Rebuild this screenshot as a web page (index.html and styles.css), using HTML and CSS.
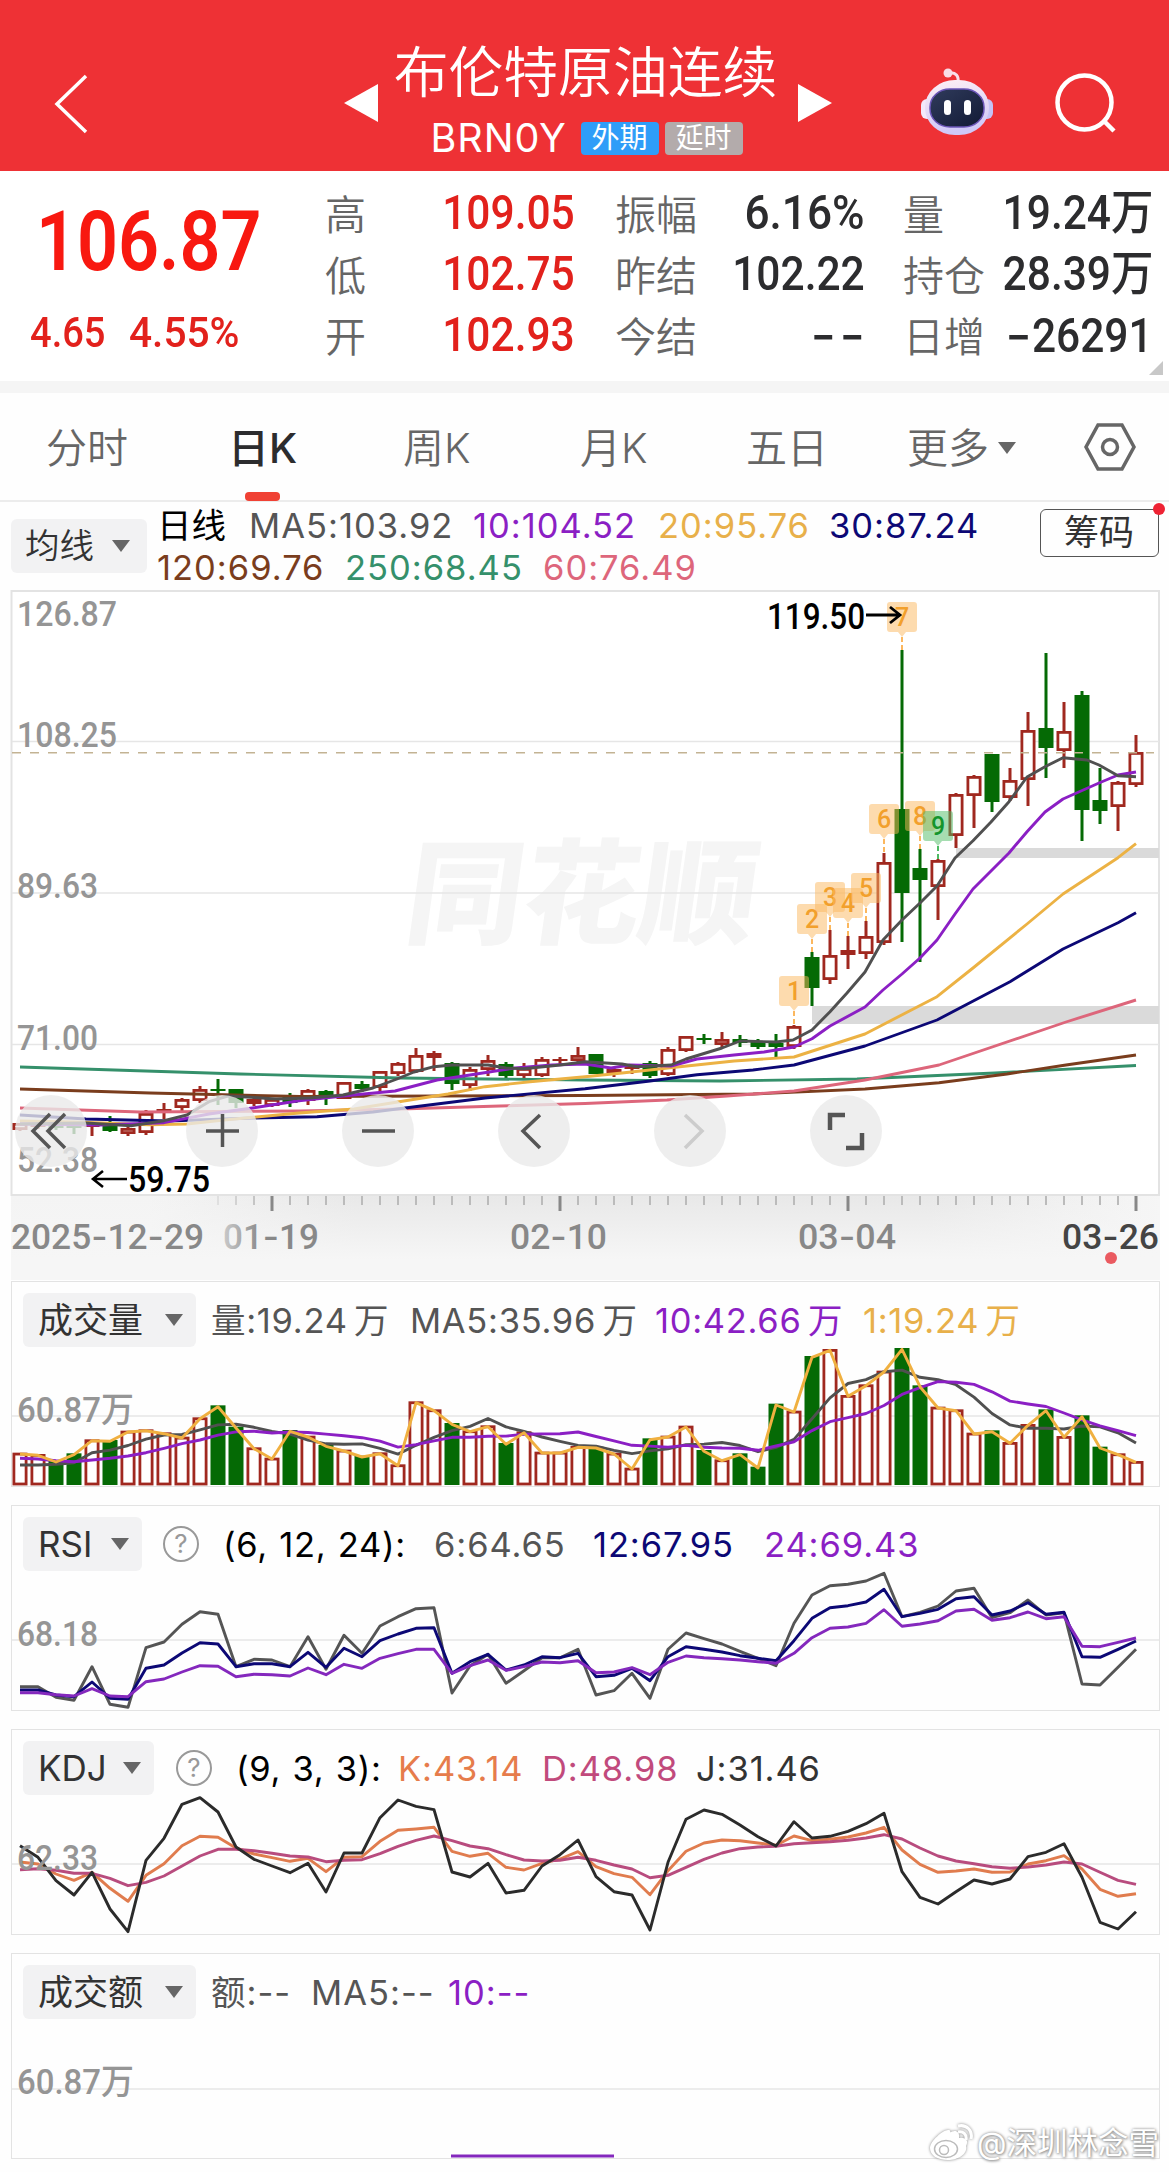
FILE: index.html
```html
<!DOCTYPE html>
<html lang="zh-CN">
<head>
<meta charset="utf-8">
<title>布伦特原油连续</title>
<link rel="stylesheet" href="styles.css">
</head>
<body>
<header class="topbar">
  <svg class="back" viewBox="0 0 36 62"><path d="M33 3 4 31l29 28"/></svg>
  <div class="instrument">
    <svg class="arrow" viewBox="0 0 34 38"><path d="M34 0v38L0 19z"/></svg>
    <div class="names">
      <h1 class="name">布伦特原油连续</h1>
      <div class="code-row"><span class="code">BRN0Y</span><span class="badge badge-blue">外期</span><span class="badge badge-gray">延时</span></div>
    </div>
    <svg class="arrow" viewBox="0 0 34 38"><path d="M0 0v38l34-19z"/></svg>
  </div>
  <svg class="robot" viewBox="0 0 72 68">
    <defs>
      <linearGradient id="shell" x1="0" y1="0" x2="0.2" y2="1"><stop offset="0" stop-color="#fff0f5"/><stop offset="1" stop-color="#cfc8f8"/></linearGradient>
      <linearGradient id="visor" x1="0" y1="0" x2="1" y2="1"><stop offset="0" stop-color="#303b5c"/><stop offset="1" stop-color="#121a35"/></linearGradient>
    </defs>
    <path d="M28 5c7-1 10 3 9 10" fill="none" stroke="#f8dfea" stroke-width="3"/>
    <circle cx="27" cy="5" r="4.5" fill="#f9dce6"/>
    <rect x="0" y="31" width="14" height="20" rx="6" fill="#f3e9fb"/>
    <rect x="58" y="31" width="14" height="20" rx="6" fill="#c5c3f5"/>
    <rect x="4" y="12" width="64" height="55" rx="30" ry="27" fill="url(#shell)"/>
    <rect x="9" y="21" width="54" height="38" rx="20" ry="18" fill="url(#visor)" stroke="#6b55b8" stroke-width="1.5"/>
    <rect x="23" y="32" width="7" height="15" rx="3.5" fill="#fff"/>
    <rect x="43" y="32" width="7" height="15" rx="3.5" fill="#fff"/>
  </svg>
  <svg class="search" viewBox="0 0 62 62"><circle cx="29.500" cy="29.500" r="27"/><path d="m49 48 10 10"/></svg>
</header>

<section class="quote">
  <div class="price">
    <div class="last"><span class="n">106.87</span></div>
    <div class="change"><span class="n">4.65</span><span class="n pct">4.55%</span></div>
  </div>
  <div class="stats">
    <span class="k">高</span><span class="v red"><span class="n">109.05</span></span>
    <span class="k">振幅</span><span class="v"><span class="n pct">6.16%</span></span>
    <span class="k">量</span><span class="v"><span class="n">19.24万</span></span>
    <span class="k">低</span><span class="v red"><span class="n">102.75</span></span>
    <span class="k">昨结</span><span class="v"><span class="n">102.22</span></span>
    <span class="k">持仓</span><span class="v"><span class="n">28.39万</span></span>
    <span class="k">开</span><span class="v red"><span class="n">102.93</span></span>
    <span class="k">今结</span><span class="v"><span class="n none">--</span></span>
    <span class="k">日增</span><span class="v"><span class="n"><span class="dash">-</span>26291</span></span>
  </div>
  <i class="corner"></i>
</section>

<nav class="tabs">
  <span class="tab">分时</span>
  <span class="tab active">日K</span>
  <span class="tab">周K</span>
  <span class="tab">月K</span>
  <span class="tab">五日</span>
  <span class="tab">更多<i class="caret"></i></span>
  <svg class="gear" viewBox="0 0 52 48"><path d="M14 2h24l12 22-12 22H14L2 24z"/><circle cx="26" cy="24" r="7.500"/></svg>
</nav>

<section class="ma">
  <div class="chip">均线<i class="caret"></i></div>
  <div class="ma-rows">
    <div class="legend ma-row1"><span class="c-black cjk">日线</span><span>MA5:103.92</span><span class="c-purple">10:104.52</span><span class="c-gold">20:95.76</span><span class="c-navy">30:87.24</span></div>
    <div class="legend ma-row2"><span class="c-brown">120:69.76</span><span class="c-green">250:68.45</span><span class="c-pink">60:76.49</span></div>
  </div>
  <div class="chips-btn">筹码<i class="dot"></i></div>
</section>

<section class="main-chart">
  <svg id="kline" viewBox="0 590 1169 690" width="1169" height="690"></svg>
  <div class="tools">
    <svg class="first" viewBox="0 0 72 72"><path d="M35 19 18 36l17 17M50 19 33 36l17 17"/></svg>
    <svg viewBox="0 0 72 72"><path d="M20 36h33M36.500 19v33"/></svg>
    <svg viewBox="0 0 72 72"><path d="M20 36h33"/></svg>
    <svg viewBox="0 0 72 72"><path d="M42 20 25 36l17 17"/></svg>
    <svg class="off" viewBox="0 0 72 72"><path d="M31 20 48 36 31 53"/></svg>
    <svg viewBox="0 0 72 72"><path class="thick" d="M20 35V20h15M36 53h16V38"/></svg>
  </div>
</section>

<section class="panel">
  <div class="panel-head head-vol">
    <div class="chip">成交量<i class="caret"></i></div>
    <span>量:19.24 万</span><span>MA5:35.96 万</span><span class="c-purple">10:42.66 万</span><span class="c-gold">1:19.24 万</span>
  </div>
  <svg id="volume" viewBox="12 1281 1147 205"></svg>
</section>
<section class="panel">
  <div class="panel-head head-rsi">
    <div class="chip">RSI<i class="caret"></i></div><i class="help">?</i>
    <span class="c-black par">(6, 12, 24):</span><span>6:64.65</span><span class="c-navy">12:67.95</span><span class="c-purple">24:69.43</span>
  </div>
  <svg id="rsi" viewBox="12 1505 1147 205"></svg>
</section>
<section class="panel">
  <div class="panel-head head-kdj">
    <div class="chip">KDJ<i class="caret"></i></div><i class="help">?</i>
    <span class="c-black par">(9, 3, 3):</span><span class="c-orange">K:43.14</span><span class="c-rose">D:48.98</span><span class="c-dark">J:31.46</span>
  </div>
  <svg id="kdj" viewBox="12 1729 1147 205"></svg>
</section>
<section class="panel">
  <div class="panel-head head-amt">
    <div class="chip">成交额<i class="caret"></i></div>
    <span>额:--</span><span>MA5:--</span><span class="c-purple">10:--</span>
  </div>
  <svg id="amount" viewBox="12 1953 1147 205"></svg>
</section>

<div class="credit">
  <svg viewBox="0 0 44 38"><path d="M20 9c6-4 11-2 10 5 7-1 10 3 7 8 2 8-8 14-18 14C8 36 1 31 1 24 1 17 14 6 19 6c3 0 3 2 1 5z" fill="#fff"/><ellipse cx="17" cy="25" rx="11.500" ry="8.500" fill="none" stroke="#bbb" stroke-width="1.500"/><circle cx="15" cy="26" r="4.500" fill="none" stroke="#bbb" stroke-width="1.500"/><path d="M29 8c5-1 9 2 8 8M29 2c9-2 15 5 13 13" fill="none" stroke="#fff" stroke-width="3"/></svg>
  <span>@深圳林念雪</span>
</div>
<script src="chart.js"></script>
</body>
</html>
```
FILE: styles.css
```css
* { box-sizing: border-box; }
body {
  margin: 0;
  width: 1169px;
  height: 2172px;
  overflow: hidden;
  position: relative;
  background: #fefefe;
  color: #333;
  font-family: Inter, "Noto Sans CJK SC", sans-serif;
}
svg { display: block; }
i { font-style: normal; }

/* header */
.topbar {
  height: 171px;
  background: #ee3135;
  color: #fff;
  display: grid;
  grid-template-columns: 344px 488px 89px 72px 62px 62px;
  align-items: start;
}
.back { width: 36px; height: 62px; margin: 73px 0 0 53px; fill: none; stroke: #fff; stroke-width: 3.5; }
.instrument { display: flex; justify-content: space-between; }
.arrow { width: 34px; height: 38px; margin-top: 84px; fill: #fff; }
.names { display: flex; flex-direction: column; align-items: center; padding: 40px 5px 0 0; }
.name { margin: 0; font-size: 54.8px; line-height: 64px; font-weight: 350; white-space: nowrap; }
.code-row { display: flex; align-items: center; height: 34px; margin-top: 17px; padding-left: 2px; }
.code { font-size: 39.5px; font-weight: 400; width: 150px; line-height: 34px; letter-spacing: 1px; }
.badge { width: 78px; height: 33px; border-radius: 4px; font-size: 28px; line-height: 33px; text-align: center; }
.badge-blue { background: #2f9df8; margin-right: 6px; }
.badge-gray { background: #b3abab; }
.robot { grid-column: 4; width: 72px; height: 68px; margin-top: 68px; }
.search { grid-column: 6; width: 62px; height: 62px; margin-top: 73px; fill: none; stroke: #fff; stroke-width: 4.5; }

/* quote */
.quote { position: relative; height: 210px; display: flex; background: #fff; }
.n {
  display: inline-block;
  font-family: Roboto, "Noto Sans CJK SC", sans-serif;
  font-weight: 500;
  transform: scaleX(.885);
  white-space: nowrap;
}
.price { width: 325px; color: #f81810; }
.last { height: 98px; margin-top: 20px; padding-left: 36px; font-size: 83px; line-height: 98px; }
.last .n { transform-origin: left; font-weight: 600; transform: scaleX(.865); }
.change { display: flex; font-size: 43px; line-height: 50px; margin-top: 18px; padding-left: 30px; color: #e2211c; }
.change .n { transform-origin: left; width: 99px; }
.change .pct { transform: scaleX(.945); }
.stats {
  display: grid;
  grid-template-columns: 60px 190px 40px 100px 150px 38px 85px 165px;
  grid-template-rows: repeat(3, 61px);
  padding-top: 13px;
}
.k { font-size: 41px; line-height: 63px; font-weight: 350; color: #666; white-space: nowrap; }
.v { font-size: 48px; line-height: 58px; display: flex; justify-content: flex-end; color: #2c2c2e; }
.v .n { transform-origin: right; }
.v .pct { transform: scaleX(.92); }
.red { color: #e2211c; }
.k:nth-child(6n + 1) { grid-column: 1; }
.k:nth-child(6n + 3) { grid-column: 4; }
.k:nth-child(6n + 5) { grid-column: 7; }
.dash { display: inline-block; font-family: Inter, sans-serif; transform: scaleX(1.35); transform-origin: right; }
.v .none { font-family: Inter, sans-serif; letter-spacing: 3px; transform: scaleX(1.15); margin-right: -3px; }
.corner { position: absolute; right: 6px; bottom: 6px; border: 7px solid transparent; border-right-color: #c8c8c8; border-bottom-color: #c8c8c8; }

/* tabs */
.tabs {
  height: 121px;
  border-top: 12px solid #f5f5f5;
  border-bottom: 2px solid #ececec;
  display: grid;
  grid-template-columns: 182px 175px 177px 166px 161px 177px 52px;
  padding-left: 46px;
  font-size: 41px;
  font-weight: 350;
  color: #666;
  line-height: 110px;
}
.tab { position: relative; white-space: nowrap; }
.tab.active { font-weight: 500; color: #2c2c2e; }
.tab.active::after { content: ""; position: absolute; left: 17px; bottom: 2px; width: 35px; height: 9px; border-radius: 4px; background: #f04134; }
.caret { display: inline-block; border: 9px solid transparent; border-top: 12px solid #666; border-bottom: 0; vertical-align: middle; }
.tab .caret { margin-left: 9px; margin-top: -7px; }
.gear { width: 52px; height: 48px; margin-top: 30px; fill: none; stroke: #666; stroke-width: 3.5; }

/* legends */
.chip { background: #f2f2f3; border-radius: 6px; color: #333; height: 54px; line-height: 54px; font-size: 35px; padding: 0 13px 0 15px; display: flex; align-items: center; justify-content: space-between; white-space: nowrap; }
.ma { height: 88px; display: grid; grid-template-columns: 136px 893px 119px; padding-left: 11px; }
.ma .chip { margin-top: 17px; font-size: 34.5px; font-weight: 350; padding: 0 17px 0 14px; }
.legend { display: grid; font-size: 34.5px; line-height: 42px; color: #555; white-space: nowrap; letter-spacing: 1px; }
.ma-rows { padding-top: 3px; }
.ma-row1 { grid-template-columns: 92px 224px 185px 171px 150px; padding-left: 10px; }
.ma-row2 { grid-template-columns: 188px 198px 150px; padding-left: 10px; }
.cjk { color: #000; letter-spacing: 0; }
.chips-btn { position: relative; height: 48px; margin-top: 7px; border: 1.5px solid #555; border-radius: 6px; font-size: 35px; line-height: 44px; text-align: center; padding-right: 1px; }
.dot { position: absolute; right: -7px; top: -7px; width: 12px; height: 12px; border-radius: 50%; background: #ee2233; }
.c-black { color: #000; }
.c-dark { color: #333; }
.c-purple { color: #8b1fc4; }
.c-gold { color: #e8b04a; }
.c-navy { color: #0c0875; }
.c-brown { color: #7a3d1d; }
.c-green { color: #35906b; }
.c-pink { color: #dd667b; }
.c-orange { color: #e67c4b; }
.c-rose { color: #c14a7c; }

/* charts */
.main-chart { position: relative; height: 691px; }
.tools { position: absolute; left: 15px; top: 505px; display: flex; gap: 84px; }
.tools svg { width: 72px; height: 72px; border-radius: 50%; background: rgba(234, 234, 234, .8); fill: none; stroke: #555; stroke-width: 3.5; flex: none; }
.tools .first { margin-right: 15px; }
.tools .off { stroke: #ccc; }
.tools .thick { stroke-width: 4.5; }
.panel { position: relative; width: 1149px; height: 206px; margin: 0 0 18px 11px; border: 1.5px solid #e3e3e3; }
.panel > svg { position: absolute; left: 0; top: -1px; width: 1147px; height: 205px; overflow: visible; }
.panel-head { display: grid; margin: 11px 0 0 11px; font-size: 34.5px; line-height: 56px; color: #555; white-space: nowrap; letter-spacing: .7px; }
.panel-head .chip { letter-spacing: 0; }
.head-vol { grid-template-columns: 173px 15px 199px 245px 208px 170px; word-spacing: -4px; }
.head-vol span:nth-child(2) { grid-column: 3; }
.head-rsi { grid-template-columns: 119px 21px 60px 211px 159px 171px 160px; }
.head-kdj { grid-template-columns: 131px 22px 60px 162px 144px 154px 130px; }
.head-rsi .help, .head-kdj .help { grid-column: 3; }
.head-rsi, .head-kdj { letter-spacing: .9px; }
.head-amt { grid-template-columns: 173px 15px 100px 137px 100px; letter-spacing: 1px; }
.head-amt span:nth-child(2) { grid-column: 3; }
.par { word-spacing: 1px; letter-spacing: .7px; }
.help { width: 36px; height: 36px; margin-top: 9px; border: 2.5px solid #999; border-radius: 50%; color: #999; font-size: 26px; line-height: 31px; text-align: center; letter-spacing: 0; }

.ylab { font-family: Roboto, "Noto Sans CJK SC", sans-serif; font-size: 35px; fill: #959595; font-weight: 500; }
.xlab { font-family: Roboto, sans-serif; font-size: 35px; fill: #888; font-weight: 500; }
.xlab.now { fill: #444; }
.xlab tspan { font-family: Inter, sans-serif; }
.note { font-family: Roboto, sans-serif; font-size: 36px; font-weight: 500; fill: #000; }
.mark { font-family: Roboto, sans-serif; font-size: 25px; font-weight: 500; text-anchor: middle; }
.brand { font-family: "Noto Sans CJK SC", sans-serif; font-weight: 900; font-size: 114px; fill: #f5f5f5; }

.credit { position: absolute; left: 929px; top: 2121px; display: flex; align-items: center; gap: 4px; color: #fff; font-size: 30.5px; line-height: 44px; white-space: nowrap; text-shadow: 0 0 3px #888, 1px 1px 3px #999; }
.credit svg { width: 44px; height: 38px; filter: drop-shadow(0 0 1.5px #888); }
```
FILE: chart.js
```js
const STEP = 18, X0 = 20;
const px = i => X0 + STEP * i;
const RED = '#a0281f', GREEN = '#056a05';

// direction, high, body top, body bottom, low
const candles = `r1123 1123 1130 1131|r1122 1123 1127 1129|g1124 1125 1128 1130|g1124 1125 1128 1134|r1123 1125 1127 1136
g1116 1125 1131 1132|r1127 1128 1134 1136|r1110 1113 1133 1135|r1103 1109 1113 1119|r1098 1099 1108 1111|r1086 1089 1101 1103
g1079 1089 1091 1105|g1089 1089 1103 1108|r1097 1099 1104 1106|r1098 1099 1106 1107|g1093 1097 1103 1107|r1089 1090 1101 1105
g1090 1091 1096 1105|r1082 1082 1099 1099|g1081 1084 1089 1092|r1071 1071 1088 1092|r1062 1063 1074 1076|r1048 1055 1072 1073
r1051 1053 1058 1071|g1062 1063 1084 1090|r1067 1069 1086 1091|r1055 1060 1070 1076|g1062 1064 1076 1078|r1063 1068 1076 1078
r1057 1059 1076 1077|r1057 1059 1061 1064|r1047 1055 1061 1062|g1054 1054 1074 1074|r1068 1069 1073 1077|r1064 1065 1069 1074
g1061 1063 1076 1078|r1047 1049 1075 1076|r1036 1036 1051 1052|g1034 1038 1040 1044|r1032 1039 1045 1048|g1035 1039 1043 1047
g1039 1041 1047 1049|g1034 1043 1047 1057|r1025 1026 1047 1049|g952 957 988 1006|r930 955 980 984|r936 950 955 969|r921 936 954 959
r853 862 943 945|g650 809 893 942|g849 868 880 962|r859 860 887 920|r793 794 836 848|r775 776 796 828|g754 754 802 812
r768 780 798 801|r712 730 780 806|g653 728 748 778|r702 731 751 768|g691 695 810 841|g768 800 811 824|r781 782 807 831|r735 752 785 787`
  .split(/[|\n]/).map(s => ({ up: s[0] === 'r', v: s.slice(1).split(' ').map(Number) }));

const lines = {
  '#35906b': '20,1067 240,1074 400,1078 585,1080 720,1081 857,1079 995,1073 1136,1065.5',
  '#7a3d1d': '20,1089 150,1093 300,1096.500 585,1095.500 753,1094 865,1089 939,1082.700 1007,1074 1066,1065 1136,1055',
  '#dd667b': '20,1108 140,1112 300,1111 400,1109 500,1106 585,1103.500 667,1100 727,1096 794,1091 865,1080 939,1065 1066,1022 1136,1000',
  '#0c0875': '20,1115 86,1119 168,1121 254,1118 317,1116.700 373,1112 429,1105 485,1098 585,1088.700 650,1081 697,1074.700 753,1070 794,1065 865,1046 937,1020 1010,981.700 1063,949 1118,922.700 1136,912.700',
  '#ecb244': '20,1121 75,1122 149,1124.700 187,1124 224,1120 299,1113 354,1109 410,1100 448,1094 485,1086.700 530,1081.700 585,1076.700 622,1073 668,1068 734,1061 794,1057 865,1034 937,996.700 973,968 1027,924 1063,894 1118,857.700 1136,843.700',
  '#8b1fc4': '20,1124 100,1125 164,1122.700 209,1114 254,1107.700 299,1100.700 343,1096 395,1091 437,1080 470,1075 515,1068 552,1065 585,1064 611,1068 630,1065 671,1066 697,1059 734,1055 764,1052 794,1047 812,1038.700 830,1026 865,1007 883,990 902,974 920,958 937,940 955,914 973,889 991,871 1009,853 1027,831.700 1045,812 1063,799 1081,791 1099,783 1118,775 1136,772',
  '#505050': '20,1124 86,1123 131,1125.700 164,1120.700 187,1115 209,1101.700 228,1096 246,1097 276,1099 310,1098 343,1095 373,1088 397,1079 414,1072 434,1066.700 452,1065 488,1065 506,1068 524,1068.700 541,1067 560,1065 585,1061.700 622,1064 637,1066.700 671,1065 686,1059 722,1048 740,1041 776,1042 793,1040 812,1030 830,1011.700 847,993 865,972 883,940 902,920 920,903 937,886 955,858 973,840.700 991,822 1009,801.700 1027,777 1045,766.700 1063,757.700 1087,760 1099,765 1118,775.700 1136,776.700'
};

const path = (pts, c, w = 2.9) => `<polyline points="${pts}" fill="none" stroke="${c}" stroke-width="${w}" stroke-linejoin="round"/>`;
const series = (arr, top, c) => path(arr.map((p, i) => `${px(i)},${(top + p / 3).toFixed(1)}`).join(' '), c);
const hline = (y, c = '#e6e6e6') => `<path d="M12 ${y}H1159" stroke="${c}" stroke-width="1.5"/>`;
const ylab = (y, t, w) => `<text class="ylab" x="17" y="${y + 12.5}" textLength="${w}" lengthAdjust="spacingAndGlyphs">${t}</text>`;

// main chart
let s = `<defs><linearGradient id="axis"><stop offset="0" stop-color="#f4f4f4"/><stop offset=".12" stop-color="#f4f4f4"/><stop offset=".3" stop-color="#e8e8e8"/><stop offset=".8" stop-color="#e8e8e8"/><stop offset="1" stop-color="#f6f6f6"/></linearGradient>
<linearGradient id="fade" x2="0" y2="1"><stop offset="0" stop-color="#f6f6f6" stop-opacity="0"/><stop offset=".75" stop-color="#f6f6f6"/></linearGradient>
<linearGradient id="dim" gradientUnits="userSpaceOnUse" x1="224" x2="262"><stop offset="0" stop-color="#c8c8c8"/><stop offset="1" stop-color="#888"/></linearGradient></defs>
<rect x="11" y="1195" width="1149" height="86" fill="url(#axis)"/><rect x="11" y="1195" width="1149" height="86" fill="url(#fade)"/>
<rect x="11.500" y="591" width="1147.500" height="604" fill="#fff" stroke="#e3e3e3" stroke-width="2"/>
<text class="brand" transform="translate(402 935) skewX(-8)" textLength="350" lengthAdjust="spacingAndGlyphs">同花顺</text>`;
s += [741.5, 893, 1044.5].map(y => hline(y)).join('');
s += `<rect x="956" y="848" width="203" height="10" fill="#dadada"/><rect x="812" y="1006" width="347" height="18" fill="#dadada"/>`;
s += ylab(613, '126.87', 100) + ylab(734, '108.25', 100) + ylab(885, '89.63', 81) + ylab(1037, '71.00', 81) + ylab(1159, '52.38', 81);
candles.forEach((c, i) => {
  const [h, t, b, l] = c.v, x = px(i), k = c.up ? RED : GREEN;
  s += `<path d="M${x} ${h}V${t}M${x} ${b}V${l}" stroke="${k}" stroke-width="3"/>`;
  s += c.up && b - t > 4
    ? `<rect x="${x - 6.1}" y="${t + 1.4}" width="12.2" height="${b - t - 2.8}" fill="#fff" stroke="${k}" stroke-width="2.8"/>`
    : `<rect x="${x - 7.5}" y="${t}" width="15" height="${b - t}" fill="${k}"/>`;
});
s += `<path d="M12 752.7H1154" stroke="#c3b393" stroke-width="1.6" stroke-dasharray="9 9"/>`;
for (const c in lines) s += path(lines[c], c);

// nine-turn markers: number, top edge
[976, 904, 882, 888, 873, 804, 602, 801, 811].forEach((y, n) => {
  const i = 43 + n, x = px(i), g = n === 8, f = g ? '#4dbb63' : '#fbb75e', end = candles[i].v[0];
  s += `<path fill="${f}" fill-opacity=".5" d="M${x - 12} ${y}h24q3 0 3 3v24q0 3-3 3h-8l-4 5-4-5h-8q-3 0-3-3v-24q0-3 3-3z"/>
<path d="M${x} ${y + 35}V${end}" stroke="${f}" stroke-width="2" stroke-dasharray="5 3"/>
<text class="mark" x="${x}" y="${y + 24}" fill="${g ? '#15952c' : '#f2a02c'}">${n + 1}</text>`;
});
s += `<text class="note" x="767" y="629" textLength="98" lengthAdjust="spacingAndGlyphs">119.50</text>
<path d="M866 615h33m-9-8 10 8-10 8" fill="none" stroke="#000" stroke-width="2.8"/>
<text class="note" x="128" y="1192" textLength="82" lengthAdjust="spacingAndGlyphs">59.75</text>
<path d="M127 1179H94m9-8-10 8 10 8" fill="none" stroke="#000" stroke-width="2.600"/>`;

// time axis
for (let i = 11; i < 63; i++) {
  const big = i % 16 === 14;
  s += `<path d="M${px(i)} 1196v${big ? 15 : 9}" stroke="${big ? '#888' : '#bbb'}" stroke-width="${big ? 3 : 2}" opacity="${i < 14 ? .3 + (i - 11) * .25 : 1}"/>`;
}
[[11, 193, '2025-12-29'], [223, 96, '01-19'], [510, 97, '02-10'], [798, 98, '03-04'], [1062, 97, '03-26']].forEach(([x, w, t]) => {
  const extra = t === '01-19' ? ' style="fill:url(#dim)"' : '';
  s += `<text class="xlab${t === '03-26' ? ' now' : ''}" x="${x}" y="1249" textLength="${w}" lengthAdjust="spacingAndGlyphs"${extra}>${t.replace(/-/g, '<tspan>-</tspan>')}</text>`;
});
s += `<circle cx="1111" cy="1258" r="6" fill="#ea5a60"/>`;
document.getElementById('kline').innerHTML = s;

// volume
const vol = [548,552,572,550,508,510,482,478,487,500,442,406,470,532,563,480,497,525,539,557,547,583,394,418,459,481,466,519,484,545,545,528,530,548,593,505,497,467,540,568,550,590,401,422,258,237,375,343,302,234,346,410,418,488,481,516,462,418,498,436,530,550,573];
const mean = (n, seed) => vol.map((_, i) => i < n - 1 ? seed[i] : vol.slice(i - n + 1, i + 1).reduce((a, b) => a + b) / n + 2);
s = hline(1416) + ylab(1409, '60.87万', 117);
vol.forEach((p, i) => {
  const y = 1270 + p / 3, x = px(i);
  s += candles[i].up
    ? `<rect x="${x - 6.1}" y="${y + 1.4}" width="12.2" height="${1484 - y - 1.4}" fill="#fff" stroke="${RED}" stroke-width="2.8"/>`
    : `<rect x="${x - 7.5}" y="${y}" width="15" height="${1485 - y}" fill="${GREEN}"/>`;
});
s += series(mean(5, [585, 585, 583, 578]), 1270, '#505050');
s += series(mean(10, [565, 567, 572, 575, 570, 565, 558, 548, 535]), 1270, '#8b1fc4');
s += series(vol.map(p => p + 4), 1270, '#f0b040');
document.getElementById('volume').innerHTML = s;

// RSI
const rsi6 = [1250,1250,1282,1291,1190,1303,1312,1133,1116,1063,1025,1033,1190,1168,1170,1190,1100,1198,1096,1150,1068,1040,1016,1013,1269,1188,1153,1240,1202,1163,1163,1138,1275,1262,1210,1285,1138,1089,1106,1122,1144,1165,1187,1060,975,947,943,933,910,1040,1027,1008,963,955,1043,1028,990,1035,1028,1242,1245,1192,1138];
const rsi12 = [1260,1260,1275,1280,1236,1285,1288,1195,1185,1149,1118,1122,1190,1181,1181,1190,1147,1192,1135,1160,1112,1092,1075,1073,1210,1175,1153,1200,1185,1160,1163,1150,1220,1216,1195,1232,1160,1130,1138,1146,1157,1165,1172,1112,1045,1013,1007,996,958,1040,1030,1018,986,980,1035,1023,998,1033,1027,1160,1162,1138,1113];
const rsi24 = [1268,1268,1274,1278,1256,1278,1280,1235,1227,1206,1187,1189,1220,1213,1214,1218,1194,1214,1183,1195,1165,1151,1138,1138,1210,1187,1170,1201,1190,1176,1178,1172,1208,1206,1193,1214,1177,1158,1163,1166,1170,1175,1180,1150,1103,1075,1071,1060,1019,1069,1062,1052,1023,1018,1051,1043,1026,1046,1040,1129,1130,1117,1104];
document.getElementById('rsi').innerHTML = hline(1640) + ylab(1633, '68.18', 81) + series(rsi6, 1270, '#555') + series(rsi12, 1270, '#0c0875') + series(rsi24, 1270, '#8428bd');

// KDJ
const K = [426,432,462,481,457,505,544,466,431,377,349,352,384,402,413,424,415,455,412,410,364,331,327,322,394,409,400,442,450,430,417,395,440,461,472,524,452,394,369,360,362,369,376,348,362,358,351,339,322,390,433,457,453,447,457,456,432,422,407,447,508,529,521];
const D = [449,446,451,460,460,475,497,487,468,438,408,388,388,392,400,408,411,425,421,419,401,379,361,348,362,378,386,404,420,423,421,412,421,435,447,473,466,442,418,399,386,381,379,371,368,365,361,354,344,357,384,408,423,431,440,445,441,435,426,432,457,481,493];
const J = [377,412,482,525,457,567,635,421,355,253,233,276,381,418,438,458,430,516,399,399,293,240,259,269,456,471,430,519,511,438,404,360,470,515,525,630,427,298,270,283,315,350,378,305,354,349,334,311,280,455,532,552,515,480,492,477,410,397,371,472,607,627,575];
document.getElementById('kdj').innerHTML = hline(1864) + series(K, 1720, '#e07c4e') + series(D, 1720, '#b84c7e') + series(J, 1720, '#2b2b2b') + ylab(1857, '62.33', 81);

// turnover
document.getElementById('amount').innerHTML = hline(2089) + ylab(2081, '60.87万', 117) + path('451,2156 614,2156', '#8428bd', 3.2);
```
